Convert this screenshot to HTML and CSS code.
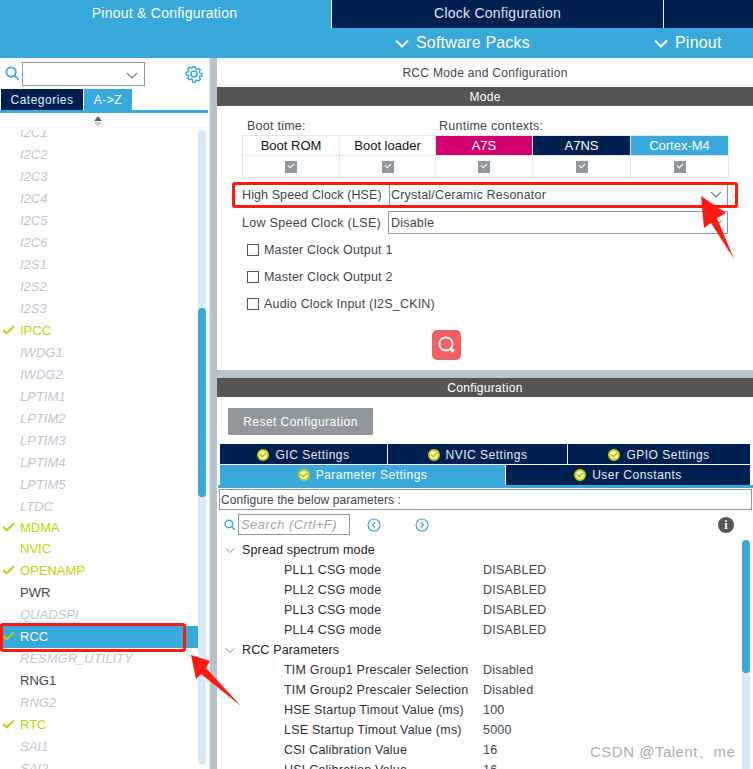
FILE: index.html
```html
<!DOCTYPE html>
<html lang="en">

<head>
    <meta charset="UTF-8">
    <title>RCC Mode and Configuration</title>
    <link rel="stylesheet" href="styles.css">
</head>

<body>
    <div class="app">
        <!-- Top tabs -->
        <div class="top-tabs">
            <div class="top-tab active">Pinout &amp; Configuration</div>
            <div class="top-tab">Clock Configuration</div>
            <div class="top-tab rest"></div>
        </div>
        <div class="sub-bar">
            <div class="sub-item packs"><svg class="sub-chev" viewBox="0 0 14 9"><polyline points="1,1.5 7,7.5 13,1.5"/></svg>Software Packs</div>
            <div class="sub-item pinout"><svg class="sub-chev" viewBox="0 0 14 9"><polyline points="1,1.5 7,7.5 13,1.5"/></svg>Pinout</div>
        </div>

        <div class="main">
            <!-- Left panel -->
            <div class="left">
                <div class="search-row">
                    <svg class="search-icon" viewBox="0 0 16 16"><circle cx="6.5" cy="6.5" r="5"/><line x1="10" y1="10" x2="14.5" y2="14.5"/></svg>
                    <div class="combo"><svg class="chev" viewBox="0 0 12 7"><polyline points="1,1 6,6 11,1"/></svg></div>
                    <svg class="gear" viewBox="0 0 18 18">
                        <path d="M7.4 1h3.2l.4 2.3 1.5.7 2-1.3 2.2 2.2-1.3 2 .6 1.5 2.3.4v3.2l-2.3.4-.6 1.5 1.3 2-2.2 2.2-2-1.3-1.5.6-.4 2.3H7.4L7 15.9l-1.5-.6-2 1.3-2.2-2.2 1.3-2-.6-1.5L-.3 10.5V7.3L2 6.9l.6-1.5-1.3-2 2.2-2.2 2 1.3L7 1.9z" transform="translate(1.5 1.1) scale(.83)"/>
                        <circle cx="9" cy="9" r="3"/>
                    </svg>
                </div>
                <div class="left-tabs">
                    <div class="left-tab">Categories</div>
                    <div class="left-tab active">A-&gt;Z</div>
                </div>
                <div class="sort"><span class="sort-up"></span><span class="sort-down"></span></div>
                <div class="list-wrap">
                    <ul class="list">
                        <li class="off">I2C1</li>
                        <li class="off">I2C2</li>
                        <li class="off">I2C3</li>
                        <li class="off">I2C4</li>
                        <li class="off">I2C5</li>
                        <li class="off">I2C6</li>
                        <li class="off">I2S1</li>
                        <li class="off">I2S2</li>
                        <li class="off">I2S3</li>
                        <li class="on"><svg class="tick" viewBox="0 0 14 11"><polyline points="1,5.5 5,9 13,1.5"/></svg>IPCC</li>
                        <li class="off">IWDG1</li>
                        <li class="off">IWDG2</li>
                        <li class="off">LPTIM1</li>
                        <li class="off">LPTIM2</li>
                        <li class="off">LPTIM3</li>
                        <li class="off">LPTIM4</li>
                        <li class="off">LPTIM5</li>
                        <li class="off tight">LTDC</li>
                        <li class="on tight"><svg class="tick" viewBox="0 0 14 11"><polyline points="1,5.5 5,9 13,1.5"/></svg>MDMA</li>
                        <li class="on">NVIC</li>
                        <li class="on"><svg class="tick" viewBox="0 0 14 11"><polyline points="1,5.5 5,9 13,1.5"/></svg>OPENAMP</li>
                        <li>PWR</li>
                        <li class="off">QUADSPI</li>
                        <li class="selected"><svg class="tick" viewBox="0 0 14 11"><polyline points="1,5.5 5,9 13,1.5"/></svg>RCC</li>
                        <li class="off">RESMGR_UTILITY</li>
                        <li>RNG1</li>
                        <li class="off">RNG2</li>
                        <li class="on"><svg class="tick" viewBox="0 0 14 11"><polyline points="1,5.5 5,9 13,1.5"/></svg>RTC</li>
                        <li class="off">SAI1</li>
                        <li class="off">SAI2</li>
                    </ul>
                    <div class="scroll"><div class="thumb"></div></div>
                </div>
            </div>

            <div class="splitter"></div>

            <!-- Right panel -->
            <div class="right">
                <div class="panel-title">RCC Mode and Configuration</div>
                <div class="section-head">Mode</div>
                <div class="mode">
                    <div class="ctx-labels">
                        <span class="boot-label">Boot time:</span>
                        <span>Runtime contexts:</span>
                    </div>
                    <div class="ctx-table">
                        <div class="ctx-head">Boot ROM</div>
                        <div class="ctx-head">Boot loader</div>
                        <div class="ctx-head pink">A7S</div>
                        <div class="ctx-head navy">A7NS</div>
                        <div class="ctx-head blue">Cortex-M4</div>
                        <div class="ctx-cell"><span class="check"></span></div>
                        <div class="ctx-cell"><span class="check"></span></div>
                        <div class="ctx-cell"><span class="check"></span></div>
                        <div class="ctx-cell"><span class="check"></span></div>
                        <div class="ctx-cell"><span class="check"></span></div>
                    </div>
                    <div class="field hse">
                        <label>High Speed Clock (HSE)</label>
                        <div class="select">Crystal/Ceramic Resonator<svg class="chev" viewBox="0 0 12 7"><polyline points="1,1 6,6 11,1"/></svg></div>
                    </div>
                    <div class="field lse">
                        <label>Low Speed Clock (LSE)</label>
                        <div class="select">Disable<svg class="chev" viewBox="0 0 12 7"><polyline points="1,1 6,6 11,1"/></svg></div>
                    </div>
                    <div class="opt first"><span class="box"></span>Master Clock Output 1</div>
                    <div class="opt"><span class="box"></span>Master Clock Output 2</div>
                    <div class="opt"><span class="box"></span>Audio Clock Input (I2S_CKIN)</div>
                    <div class="find-btn">
                        <svg viewBox="0 0 20 20"><circle cx="9" cy="9" r="6"/><line class="handle" x1="13.5" y1="13.5" x2="16" y2="16"/></svg>
                    </div>
                </div>
                <div class="h-splitter"></div>
                <div class="section-head config-head">Configuration</div>
                <div class="config">
                    <div class="reset">Reset Configuration</div>
                    <div class="cfg-tabs row-one">
                        <div class="cfg-tab"><span class="badge"></span>GIC Settings</div>
                        <div class="cfg-tab"><span class="badge"></span>NVIC Settings</div>
                        <div class="cfg-tab"><span class="badge"></span>GPIO Settings</div>
                    </div>
                    <div class="cfg-tabs row-two">
                        <div class="cfg-tab active"><span class="badge"></span>Parameter Settings</div>
                        <div class="cfg-tab"><span class="badge"></span>User Constants</div>
                    </div>
                    <div class="cfg-rule"></div>
                    <div class="cfg-note">Configure the below parameters :</div>
                    <div class="tool-row">
                        <svg class="search-icon small" viewBox="0 0 16 16"><circle cx="6.5" cy="6.5" r="5"/><line x1="10" y1="10" x2="14.5" y2="14.5"/></svg>
                        <div class="search-box">Search (Crtl+F)</div>
                        <svg class="nav prev" viewBox="0 0 14 14"><circle cx="7" cy="7" r="6"/><polyline points="8.2,4.5 5.5,7 8.2,9.5"/></svg>
                        <svg class="nav next" viewBox="0 0 14 14"><circle cx="7" cy="7" r="6"/><polyline points="5.8,4.5 8.5,7 5.8,9.5"/></svg>
                        <div class="info">i</div>
                    </div>
                    <div class="tree-wrap">
                        <div class="tree">
                            <div class="group"><svg class="chev" viewBox="0 0 12 7"><polyline points="1,1 6,6 11,1"/></svg>Spread spectrum mode</div>
                            <div class="param"><span>PLL1 CSG mode</span><span>DISABLED</span></div>
                            <div class="param"><span>PLL2 CSG mode</span><span>DISABLED</span></div>
                            <div class="param"><span>PLL3 CSG mode</span><span>DISABLED</span></div>
                            <div class="param"><span>PLL4 CSG mode</span><span>DISABLED</span></div>
                            <div class="group"><svg class="chev" viewBox="0 0 12 7"><polyline points="1,1 6,6 11,1"/></svg>RCC Parameters</div>
                            <div class="param"><span>TIM Group1 Prescaler Selection</span><span>Disabled</span></div>
                            <div class="param"><span>TIM Group2 Prescaler Selection</span><span>Disabled</span></div>
                            <div class="param"><span>HSE Startup Timout Value (ms)</span><span>100</span></div>
                            <div class="param"><span>LSE Startup Timout Value (ms)</span><span>5000</span></div>
                            <div class="param"><span>CSI Calibration Value</span><span>16</span></div>
                            <div class="param"><span>HSI Calibration Value</span><span>16</span></div>
                        </div>
                        <div class="scroll tree-scroll"><div class="thumb"></div></div>
                    </div>
                </div>
            </div>
        </div>
    </div>

    <!-- Red annotations drawn on top of the screenshot -->
    <div class="mark mark-hse"></div>
    <div class="mark mark-rcc"></div>
    <svg class="arrow" viewBox="0 0 753 769">
        <polygon points="701,196 726,213 717,218 734,259 711,223 704,228"/>
        <polygon points="191,655 210,661 206,668 241,706 201,674 196,679"/>
    </svg>
    <div class="watermark">CSDN @Talent、me</div>
</body>

</html>
```

FILE: styles.css
```css
* {
    box-sizing: border-box;
}

body {
    margin: 0;
    width: 753px;
    height: 769px;
    overflow: hidden;
    position: relative;
    font-family: "Liberation Sans", Arial, sans-serif;
    font-size: 12px;
    color: #3d4552;
    background: #fff;
}

.app {
    display: flex;
    flex-direction: column;
    height: 769px;
}

/* Top tabs */
.top-tabs {
    display: flex;
    height: 28px;
    background: #002052;
}

.top-tab {
    width: 332px;
    border-right: 1px solid #fff;
    color: #dfe6ef;
    font-size: 14px;
    letter-spacing: .25px;
    text-align: center;
    line-height: 26px;
}

.top-tab.active {
    width: 332px;
    padding-right: 2px;
    background: #39a9dc;
    color: #fff;
    border-right: 1px solid #fff;
}

.top-tab.rest {
    flex: 1;
    border: none;
}

.sub-bar {
    position: relative;
    height: 30px;
    background: #39a9dc;
    color: #fff;
    font-size: 16px;
    display: flex;
    padding-left: 395px;
}

.sub-item {
    display: flex;
    align-items: center;
    letter-spacing: .2px;
}

.sub-item.packs {
    width: 259px;
}

.sub-chev {
    width: 14px;
    height: 9px;
    margin-right: 7px;
    fill: none;
    stroke: #fff;
    stroke-width: 2;
}

.main {
    display: flex;
    flex: 1;
    min-height: 0;
}

/* Left panel */
.left {
    width: 209px;
    display: flex;
    flex-direction: column;
}

.search-row {
    display: flex;
    align-items: center;
    height: 31px;
    padding-left: 5px;
}

.search-icon {
    width: 15px;
    height: 15px;
    fill: none;
    stroke: #39a9dc;
    stroke-width: 2;
}

.combo {
    position: relative;
    width: 123px;
    height: 24px;
    margin-left: 2px;
    border: 1px solid #8f969c;
}

.chev {
    width: 12px;
    height: 7px;
    fill: none;
    stroke: #7a8087;
    stroke-width: 1.2;
}

.combo .chev {
    position: absolute;
    right: 6px;
    top: 9px;
}

.gear {
    width: 18px;
    height: 18px;
    margin-left: 40px;
    fill: none;
    stroke: #39a9dc;
    stroke-width: 1.7;
}

.left-tabs {
    display: flex;
    gap: 1px;
    height: 21px;
    padding-left: 1px;
}

.left-tab {
    width: 82px;
    background: #002052;
    color: #e6ebf2;
    letter-spacing: .5px;
    text-align: center;
    line-height: 22px;
}

.left-tab.active {
    width: 48px;
    background: #39a9dc;
    color: #fff;
}

.sort {
    height: 20px;
    border-top: 3px solid #39a9dc;
    margin-right: 1px;
    display: flex;
    flex-direction: column;
    align-items: center;
    padding: 3px 12px 0 0;
    gap: 1px;
}

.sort span {
    width: 0;
    height: 0;
    border-left: 4px solid transparent;
    border-right: 4px solid transparent;
}

.sort-up {
    border-bottom: 5px solid #666;
}

.sort-down {
    border-top: 5px solid #c4c8cc;
}

.list-wrap {
    position: relative;
    flex: 1;
    min-height: 0;
    overflow: hidden;
}

.list {
    list-style: none;
    margin: -8px 0 0;
    padding: 0;
    width: 198px;
    font-size: 13px;
}

.list li {
    position: relative;
    height: 22px;
    line-height: 22px;
    padding-left: 20px;
    color: #3d4552;
}

.list li.tight {
    height: 21px;
}

.list .off {
    color: #bcc6d1;
    font-style: italic;
}

.list .on {
    color: #c3d100;
}

.list .selected {
    background: #39a9dc;
    color: #fff;
}

.tick {
    position: absolute;
    left: 2px;
    top: 5px;
    width: 13px;
    height: 10px;
    fill: none;
    stroke: #bfcd00;
    stroke-width: 2.2;
}

.scroll {
    position: absolute;
    left: 198px;
    top: 0;
    width: 8px;
    height: 635px;
    background: #d9e8f5;
    border-radius: 4px;
}

.thumb {
    position: absolute;
    top: 178px;
    width: 8px;
    height: 189px;
    background: #39a9dc;
    border-radius: 4px;
}

.splitter {
    width: 8px;
    background: #b8c4cc;
    border-left: 1px solid #e8ecef;
}

/* Right panel */
.right {
    flex: 1;
    display: flex;
    flex-direction: column;
    min-width: 0;
}

.panel-title {
    height: 29px;
    line-height: 30px;
    text-align: center;
    letter-spacing: .3px;
}

.section-head {
    height: 19px;
    line-height: 20px;
    background: #555;
    color: #fff;
    text-align: center;
    letter-spacing: .3px;
}

.mode {
    height: 264px;
    padding: 11px 25px 0;
    position: relative;
}

.ctx-labels {
    height: 18px;
    padding-left: 5px;
    display: flex;
    font-size: 12.5px;
    letter-spacing: .25px;
    line-height: 18px;
}

.boot-label {
    width: 192px;
}

.ctx-table {
    display: grid;
    grid-template-columns: 97px 96px 97px 98px 98px;
    grid-template-rows: 20px 22px;
    width: 486px;
    border-top: 1px solid #e3e6e9;
    border-left: 1px solid #e3e6e9;
}

.ctx-head,
.ctx-cell {
    display: flex;
    align-items: center;
    justify-content: center;
    border-right: 1px solid #e3e6e9;
    border-bottom: 1px solid #e3e6e9;
}

.ctx-head {
    color: #111;
    font-size: 13px;
}

.ctx-head.pink {
    background: #d5006f;
    color: #fff;
}

.ctx-head.navy {
    background: #002052;
    color: #fff;
}

.ctx-head.blue {
    background: #39a9dc;
    color: #fff;
}

.check {
    width: 12px;
    height: 12px;
    background: #8f969c;
    position: relative;
}

.check::after {
    content: "";
    position: absolute;
    left: 3px;
    top: 2px;
    width: 5px;
    height: 3px;
    border-left: 1.5px solid #fff;
    border-bottom: 1.5px solid #fff;
    transform: rotate(-45deg);
}

.field {
    display: flex;
    align-items: center;
    font-size: 12.5px;
    width: 486px;
}

.field label {
    flex: none;
    letter-spacing: .1px;
}

.hse {
    height: 24px;
    margin-top: 5px;
}

.hse label {
    width: 147px;
}

.lse {
    height: 23px;
    margin-top: 4px;
}

.lse label {
    width: 146px;
    letter-spacing: .3px;
}

.select {
    flex: 1;
    height: 100%;
    position: relative;
    border: 1px solid #8f969c;
    padding-left: 2px;
    line-height: 22px;
    letter-spacing: .2px;
}

.hse .select {
    border-width: 0 1px 0 1px;
    padding-left: 1px;
    line-height: 24px;
}

.select .chev {
    position: absolute;
    right: 5px;
    top: 8px;
}

.opt {
    display: flex;
    align-items: center;
    height: 27px;
    padding-left: 5px;
    font-size: 12.5px;
    letter-spacing: .2px;
}

.opt.first {
    margin-top: 2px;
}

.box {
    width: 12px;
    height: 12px;
    border: 1px solid #555;
    margin-right: 5px;
}

.find-btn {
    position: absolute;
    left: 215px;
    top: 224px;
    width: 29px;
    height: 30px;
    border-radius: 5px;
    background: #f45f63;
    display: flex;
    align-items: center;
    justify-content: center;
}

.find-btn svg {
    width: 22px;
    height: 22px;
    fill: none;
    stroke: #fff;
    stroke-width: 1.6;
}

.find-btn .handle {
    stroke-width: 3;
}

.h-splitter {
    height: 8px;
    background: #b8c4cc;
}

.config {
    flex: 1;
    min-height: 0;
    display: flex;
    flex-direction: column;
}

.reset {
    width: 145px;
    height: 27px;
    margin: 11px 0 9px 11px;
    background: #90979d;
    color: #fff;
    line-height: 28px;
    text-align: center;
    letter-spacing: .45px;
}

.cfg-tabs {
    display: flex;
    margin: 0 3px;
    gap: 1px;
}

.row-one {
    height: 20px;
}

.row-one .cfg-tab {
    padding-top: 1px;
}

.row-two {
    height: 20px;
    margin-top: 1px;
}

.cfg-tab {
    background: #002052;
    color: #e6ebf2;
    display: flex;
    align-items: center;
    justify-content: center;
    letter-spacing: .5px;
}

.row-one .cfg-tab:nth-child(1) {
    width: 167px;
}

.row-one .cfg-tab:nth-child(2) {
    width: 179px;
}

.row-one .cfg-tab:nth-child(3) {
    flex: 1;
}

.row-two .cfg-tab:nth-child(1) {
    width: 285px;
}

.row-two .cfg-tab:nth-child(2) {
    flex: 1;
}

.cfg-tab.active {
    background: #39a9dc;
    color: #fff;
}

.badge {
    position: relative;
    width: 12px;
    height: 12px;
    border-radius: 50%;
    background: #f4f7c0;
    border: 2px solid #c3d100;
    margin-right: 6px;
}

.badge::after {
    content: "";
    position: absolute;
    left: 1px;
    top: 1px;
    width: 5px;
    height: 3px;
    border-left: 1.5px solid #9aa500;
    border-bottom: 1.5px solid #9aa500;
    transform: rotate(-45deg);
}

.cfg-rule {
    height: 3px;
    margin-left: 1px;
    background: #39a9dc;
}

.cfg-note {
    height: 21px;
    margin: 1px 1px 0 2px;
    border: 1px solid #8f969c;
    padding-left: 1px;
    line-height: 20px;
    letter-spacing: .08px;
}

.tool-row {
    position: relative;
    display: flex;
    align-items: center;
    height: 26px;
    padding: 3px 0 0 7px;
}

.search-icon.small {
    width: 12px;
    height: 12px;
}

.search-box {
    width: 112px;
    height: 21px;
    margin-left: 2px;
    border: 1px solid #8f969c;
    color: #a0a6ac;
    font-size: 13px;
    font-style: italic;
    letter-spacing: .45px;
    line-height: 19px;
    padding-left: 2px;
}

.nav {
    width: 14px;
    height: 14px;
    fill: none;
    stroke: #39a9dc;
    stroke-width: 1.2;
}

.prev {
    margin-left: 17px;
}

.next {
    margin-left: 34px;
}

.info {
    position: absolute;
    left: 501px;
    top: 7px;
    width: 16px;
    height: 16px;
    border-radius: 50%;
    background: #555;
    color: #fff;
    font: bold 12px/16px "Liberation Serif", serif;
    text-align: center;
}

.tree-wrap {
    position: relative;
    flex: 1;
    min-height: 0;
    overflow: hidden;
}

.tree {
    padding-top: 4px;
    font-size: 12.5px;
}

.group {
    display: flex;
    align-items: center;
    height: 20px;
    padding-left: 8px;
    color: #222;
    letter-spacing: .15px;
}

.group .chev {
    width: 10px;
    margin-right: 7px;
}

.param {
    display: flex;
    height: 20px;
    line-height: 20px;
    padding-left: 67px;
    letter-spacing: .22px;
}

.param span:first-child {
    width: 199px;
    color: #2b303a;
}

.tree-scroll {
    left: 525px;
    top: 4px;
    height: 240px;
}

.tree-scroll .thumb {
    top: 0;
    height: 133px;
}

/* Annotations */
.mark {
    position: absolute;
    border: 3px solid #ff1a10;
    border-radius: 3px;
}

.mark-hse {
    left: 232px;
    top: 182px;
    width: 506px;
    height: 26px;
}

.mark-rcc {
    left: 0;
    top: 623px;
    width: 186px;
    height: 29px;
}

.arrow {
    position: absolute;
    left: 0;
    top: 0;
    width: 753px;
    height: 769px;
    fill: #ff1a10;
}

.watermark {
    position: absolute;
    left: 590px;
    top: 743px;
    font-size: 15px;
    color: #a3a3a3;
    opacity: .9;
    letter-spacing: .5px;
}
```
